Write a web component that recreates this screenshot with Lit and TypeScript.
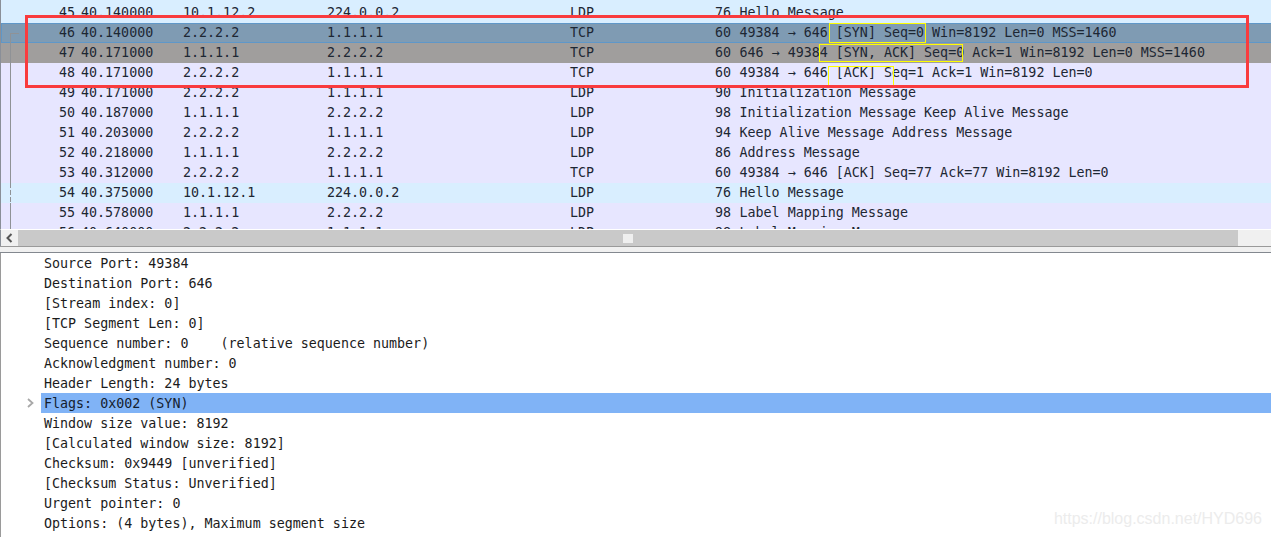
import { LitElement, html, css } from 'lit';
import { customElement } from 'lit/decorators.js';

const packets = [
  { no: 45, time: '40.140000', src: '10.1.12.2', dst: '224.0.0.2', proto: 'LDP', len: 76, info: 'Hello Message', kind: 'hello first' },
  { no: 46, time: '40.140000', src: '2.2.2.2', dst: '1.1.1.1', proto: 'TCP', len: 60, info: '49384 → 646 [SYN] Seq=0 Win=8192 Len=0 MSS=1460', kind: 'selected' },
  { no: 47, time: '40.171000', src: '1.1.1.1', dst: '2.2.2.2', proto: 'TCP', len: 60, info: '646 → 49384 [SYN, ACK] Seq=0 Ack=1 Win=8192 Len=0 MSS=1460', kind: 'grey' },
  { no: 48, time: '40.171000', src: '2.2.2.2', dst: '1.1.1.1', proto: 'TCP', len: 60, info: '49384 → 646 [ACK] Seq=1 Ack=1 Win=8192 Len=0', kind: '' },
  { no: 49, time: '40.171000', src: '2.2.2.2', dst: '1.1.1.1', proto: 'LDP', len: 90, info: 'Initialization Message', kind: '' },
  { no: 50, time: '40.187000', src: '1.1.1.1', dst: '2.2.2.2', proto: 'LDP', len: 98, info: 'Initialization Message Keep Alive Message', kind: '' },
  { no: 51, time: '40.203000', src: '2.2.2.2', dst: '1.1.1.1', proto: 'LDP', len: 94, info: 'Keep Alive Message Address Message', kind: '' },
  { no: 52, time: '40.218000', src: '1.1.1.1', dst: '2.2.2.2', proto: 'LDP', len: 86, info: 'Address Message', kind: '' },
  { no: 53, time: '40.312000', src: '2.2.2.2', dst: '1.1.1.1', proto: 'TCP', len: 60, info: '49384 → 646 [ACK] Seq=77 Ack=77 Win=8192 Len=0', kind: '' },
  { no: 54, time: '40.375000', src: '10.1.12.1', dst: '224.0.0.2', proto: 'LDP', len: 76, info: 'Hello Message', kind: 'hello' },
  { no: 55, time: '40.578000', src: '1.1.1.1', dst: '2.2.2.2', proto: 'LDP', len: 98, info: 'Label Mapping Message', kind: '' },
  { no: 56, time: '40.640000', src: '2.2.2.2', dst: '1.1.1.1', proto: 'LDP', len: 98, info: 'Label Mapping Message', kind: '' },
];

const details = [
  'Source Port: 49384',
  'Destination Port: 646',
  '[Stream index: 0]',
  '[TCP Segment Len: 0]',
  'Sequence number: 0    (relative sequence number)',
  'Acknowledgment number: 0',
  'Header Length: 24 bytes',
  'Flags: 0x002 (SYN)',
  'Window size value: 8192',
  '[Calculated window size: 8192]',
  'Checksum: 0x9449 [unverified]',
  '[Checksum Status: Unverified]',
  'Urgent pointer: 0',
  'Options: (4 bytes), Maximum segment size',
];

@customElement('app-root')
export class AppRoot extends LitElement {
  static styles = css`
    :host {
      display: block;
      position: relative;
      width: 1271px;
      height: 537px;
      overflow: hidden;
      background: #fff;
      font: 13.33px/20px 'DejaVu Sans Mono', monospace;
      color: #1d2733;
    }
    .list {
      height: 229px;
      overflow: hidden;
      border-left: 1px solid #8a8f98;
      box-sizing: border-box;
    }
    .row {
      display: grid;
      grid-template-columns: 80px 102px 144px 243px 130px 39.5px 1fr;
      height: 20px;
      background: #e7e6ff;
      white-space: pre;
    }
    .row.first { height: 23px; align-items: end; background: #d9eeff; }
    .row.hello { background: #d9eeff; }
    .row.selected {
      background: #7f9bb3;
      box-shadow: inset 0 1px 0 #5f97c8, inset 0 -1px 0 #5f97c8, inset 1px 0 0 #5f97c8;
    }
    .row.grey { background: #a09e9d; }
    .no { text-align: right; padding-right: 6px; }
    .len { text-align: right; padding-right: 8.5px; }
    .rel { position: absolute; left: 10px; width: 1px; background: #8f9296; }
    .rel.solid1 { top: 33px; height: 150px; }
    .rel.solid2 { top: 203px; height: 26px; }
    .rel.dash {
      top: 183px;
      height: 20px;
      background: repeating-linear-gradient(#8f9296 0 5px, transparent 5px 7px);
    }
    .rel.tick { top: 33px; width: 9px; height: 1px; }
    .hbar {
      display: flex;
      height: 17px;
      background: #f0f0f0;
      border-top: 1px solid #fff;
      border-left: 1px solid #8a8f98;
      box-sizing: border-box;
    }
    .arrow { width: 17px; display: flex; align-items: center; justify-content: center; }
    .track {
      width: 1220px;
      background: #c9c9c9;
      display: flex;
      justify-content: center;
      align-items: center;
    }
    .grip { width: 10px; height: 9px; background: #efefef; }
    .split {
      height: 7px;
      background: #f0f0f0;
      border-top: 1px solid #9a9a9a;
      border-bottom: 1px solid #83888f;
      box-sizing: border-box;
    }
    .tree { border-left: 1px solid #9a9a9a; height: 284px; }
    .line { height: 20px; line-height: 22px; padding-left: 43px; white-space: pre; color: #1b1b1b; position: relative; }
    .line.on { background: #80b3f6; margin-left: 40px; padding-left: 3px; color: #14202e; }
    .chev { position: absolute; left: -14px; top: 5px; }
    .mark { position: absolute; border: 1px solid #ffff00; box-sizing: border-box; }
    .mark.a { left: 829px; top: 23px; width: 97px; height: 20px; }
    .mark.b { left: 819px; top: 44px; width: 144px; height: 18px; }
    .mark.c { left: 828px; top: 66px; width: 66px; height: 20px; }
    .red {
      position: absolute;
      left: 25px;
      top: 15px;
      width: 1224px;
      height: 73px;
      border: 3px solid #f93b3e;
      box-sizing: border-box;
    }
    .wm {
      position: absolute;
      right: 9px;
      top: 510px;
      font: 16px 'Liberation Sans', sans-serif;
      color: #ececec;
    }
  `;

  render() {
    return html`
      <div class="list">
        ${packets.map(
          (p) => html`<div class="row ${p.kind}">
            <span class="no">${p.no}</span><span>${p.time}</span><span>${p.src}</span><span>${p.dst}</span><span>${p.proto}</span><span class="len">${p.len}</span><span>${p.info}</span>
          </div>`
        )}
      </div>
      <div class="hbar">
        <div class="arrow">
          <svg width="7" height="10" viewBox="0 0 7 10"><path d="M5.5 1 1.5 5 5.5 9" fill="none" stroke="#555" stroke-width="2"/></svg>
        </div>
        <div class="track"><div class="grip"></div></div>
      </div>
      <div class="split"></div>
      <div class="tree">
        ${details.map(
          (d, i) => html`<div class="line ${i === 7 ? 'on' : ''}">${i === 7
            ? html`<svg class="chev" width="7" height="10" viewBox="0 0 7 10"><path d="M1 1 5.5 5 1 9" fill="none" stroke="#a8a8a8" stroke-width="1.8"/></svg>`
            : ''}${d}</div>`
        )}
      </div>
      <div class="rel solid1"></div>
      <div class="rel tick"></div>
      <div class="rel dash"></div>
      <div class="rel solid2"></div>
      <div class="mark a"></div>
      <div class="mark b"></div>
      <div class="mark c"></div>
      <div class="red"></div>
      <div class="wm">https://blog.csdn.net/HYD696</div>
    `;
  }
}
